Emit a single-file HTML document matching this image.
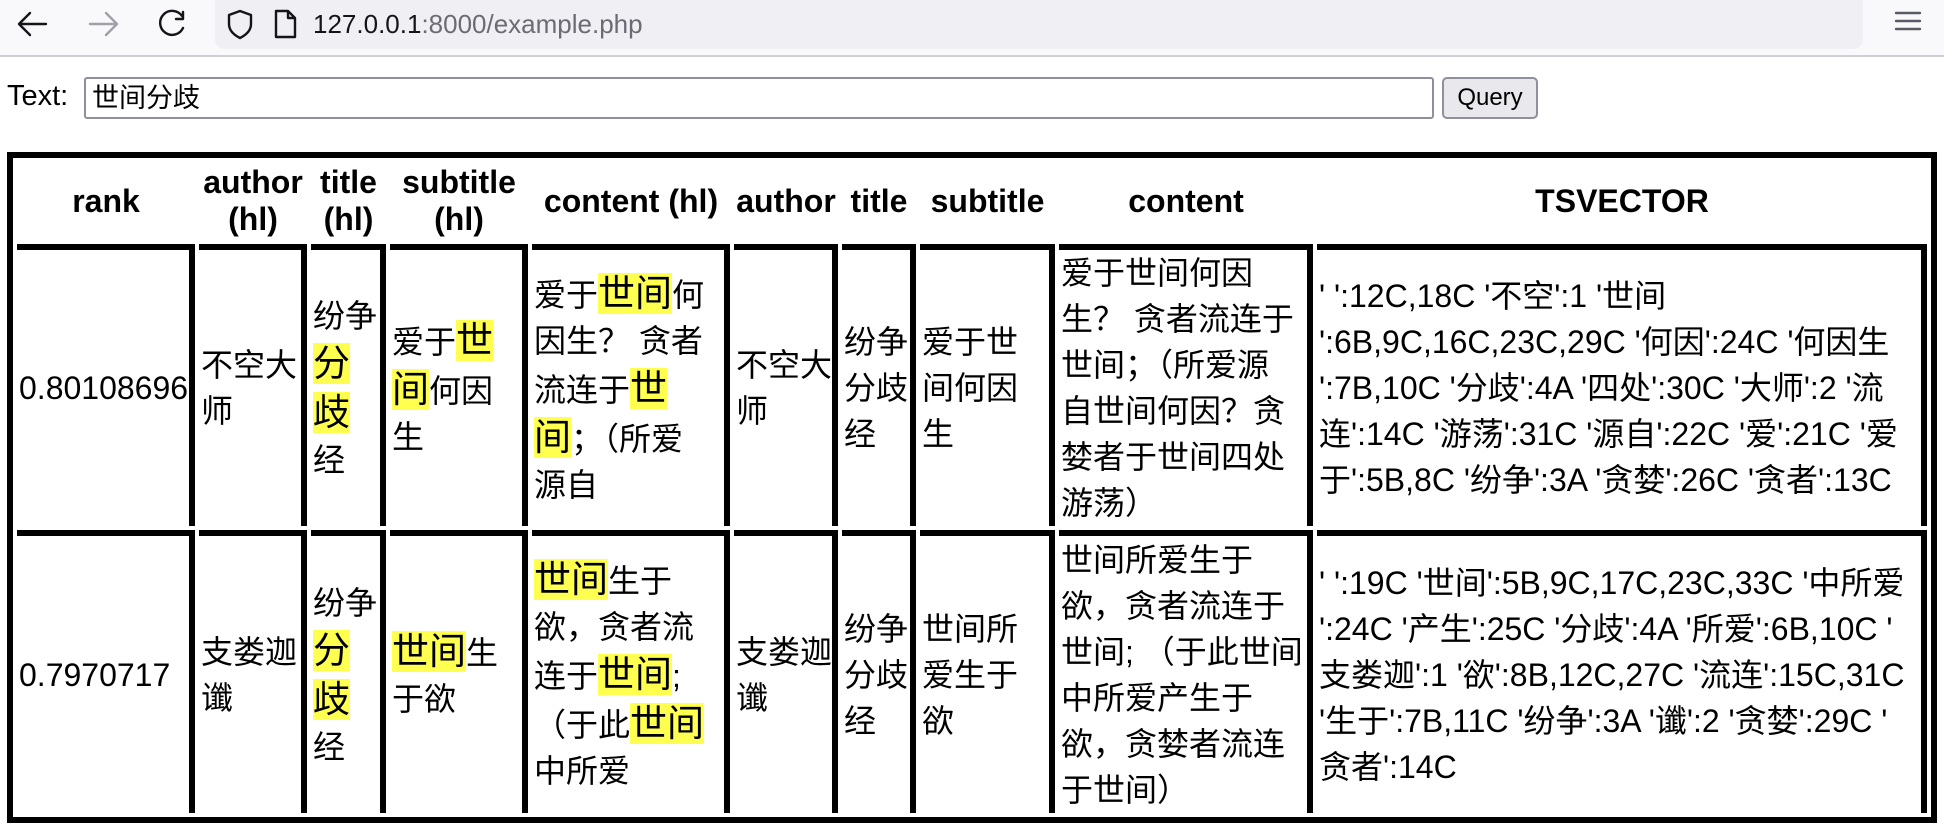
<!DOCTYPE html>
<html><head><meta charset="utf-8"><style>
*{box-sizing:border-box}
body{margin:0;width:1944px;height:838px;overflow:hidden;background:#fff;font-family:"Liberation Sans","Noto Sans CJK SC",sans-serif;color:#000}
.bar{position:absolute;left:0;top:0;width:1944px;height:57px;background:#f9f9fb;border-bottom:2px solid #cfcfd8}
.url{position:absolute;left:215px;top:0;width:1648px;height:49px;background:#f0f0f4;border-radius:0 0 10px 10px}
.urltext{position:absolute;left:313px;top:6px;font-size:26px;line-height:36px;color:#15141a}
.urltext span{color:#6b6b73}
.lbl{position:absolute;left:7px;top:78px;font-size:29px;line-height:36px}
.inp{position:absolute;left:84px;top:77px;width:1350px;height:42px;border:2px solid #8f8f9d;border-radius:3px;font-size:27px;line-height:36px;padding:1px 6px}
.btn{position:absolute;left:1442px;top:77px;width:96px;height:42px;background:#e9e9ed;border:2px solid #8f8f9d;border-radius:5px;font-size:24px;line-height:38px;text-align:center}
table{position:absolute;left:7px;top:152px;border:6px solid #000;border-collapse:separate;border-spacing:4px;table-layout:fixed;width:1930px}
th{font-size:32px;line-height:37px;font-weight:bold;height:78px;padding:0;text-align:center;white-space:nowrap}
td{font-size:32px;line-height:46px;border-top:6px solid #000;border-right:6px solid #000;padding:0 2px 0 2px;white-space:nowrap;vertical-align:middle}
mark{background:#ffff50;font-size:37px;line-height:49px;color:#000}
</style></head><body>
<div class="bar"></div>
<div class="url"></div>
<svg style="position:absolute;left:0;top:0" width="1944" height="57">
<g fill="none" stroke="#15141a" stroke-width="2.4" stroke-linecap="round" stroke-linejoin="round">
<path d="M46 24H20M30 13L19 24L30 35"/>
<path d="M90 24H116M106 13L117 24L106 35" stroke="#a0a0a8"/>
<path d="M182 16A12 12 0 1 0 183 28M183 12V19H176"/>
<path d="M240 11L251 15V24C251 31 246 35 240 38C234 35 229 31 229 24V15Z"/>
<path d="M276 11H288L295 18V37H276ZM288 11V18H295"/>
<path d="M1896 13H1920M1896 21H1920M1896 29H1920" stroke="#5b5b66"/>
</g></svg>
<div class="urltext">127.0.0.1<span>:8000/example.php</span></div>
<div class="lbl">Text:</div>
<div class="inp">世间分歧</div>
<div class="btn">Query</div>
<table>
<colgroup><col style="width:178px"><col style="width:108px"><col style="width:75px"><col style="width:138px"><col style="width:198px"><col style="width:104px"><col style="width:74px"><col style="width:135px"><col style="width:254px"><col></colgroup>
<tr><th>rank</th><th>author<br>(hl)</th><th>title<br>(hl)</th><th>subtitle<br>(hl)</th><th>content (hl)</th><th>author</th><th>title</th><th>subtitle</th><th>content</th><th>TSVECTOR</th></tr>
<tr style="height:276px">
<td>0.80108696</td>
<td>不空大<br>师</td>
<td>纷争<br><mark>分</mark><br><mark>歧</mark><br>经</td>
<td>爱于<mark>世</mark><br><mark>间</mark>何因<br>生</td>
<td>爱于<mark>世间</mark>何<br>因生？ 贪者<br>流连于<mark>世</mark><br><mark>间</mark>；（所爱<br>源自</td>
<td>不空大<br>师</td>
<td>纷争<br>分歧<br>经</td>
<td>爱于世<br>间何因<br>生</td>
<td>爱于世间何因<br>生？ 贪者流连于<br>世间；（所爱源<br>自世间何因？贪<br>婪者于世间四处<br>游荡）</td>
<td>' ':12C,18C '不空':1 '世间<br>':6B,9C,16C,23C,29C '何因':24C '何因生<br>':7B,10C '分歧':4A '四处':30C '大师':2 '流<br>连':14C '游荡':31C '源自':22C '爱':21C '爱<br>于':5B,8C '纷争':3A '贪婪':26C '贪者':13C</td>
</tr>
<tr style="height:283px">
<td>0.7970717</td>
<td>支娄迦<br>谶</td>
<td>纷争<br><mark>分</mark><br><mark>歧</mark><br>经</td>
<td><mark>世间</mark>生<br>于欲</td>
<td><mark>世间</mark>生于<br>欲，贪者流<br>连于<mark>世间</mark>;<br>（于此<mark>世间</mark><br>中所爱</td>
<td>支娄迦<br>谶</td>
<td>纷争<br>分歧<br>经</td>
<td>世间所<br>爱生于<br>欲</td>
<td>世间所爱生于<br>欲，贪者流连于<br>世间; （于此世间<br>中所爱产生于<br>欲，贪婪者流连<br>于世间）</td>
<td>' ':19C '世间':5B,9C,17C,23C,33C '中所爱<br>':24C '产生':25C '分歧':4A '所爱':6B,10C '<br>支娄迦':1 '欲':8B,12C,27C '流连':15C,31C<br>'生于':7B,11C '纷争':3A '谶':2 '贪婪':29C '<br>贪者':14C</td>
</tr>
</table>
</body></html>
